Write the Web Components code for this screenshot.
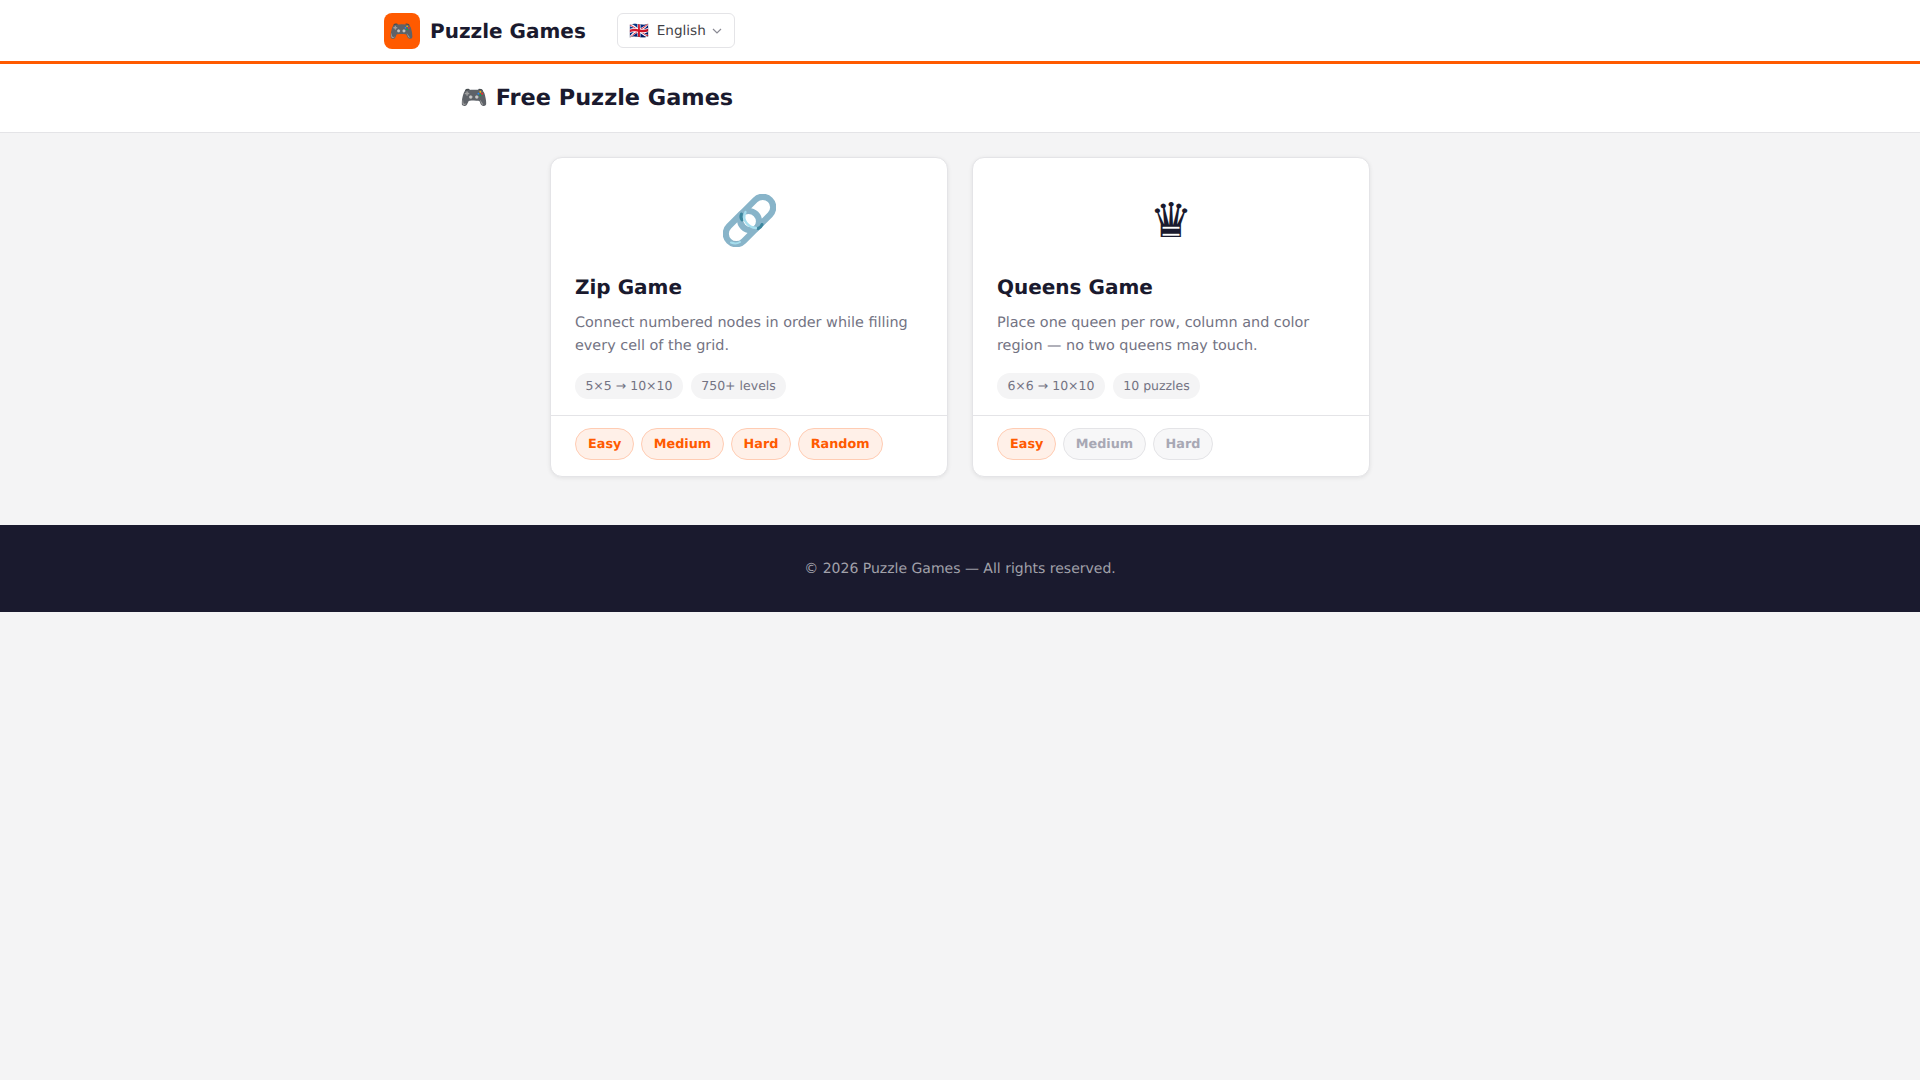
<!DOCTYPE html>
<html lang="en">
<head>
<meta charset="utf-8">
<title>Puzzle Games</title>
<style>
    html, body {
        margin: 0;
        min-height: 100%;
        background: #f4f4f5;
        color: #1a1a2e;
        font-family: "DejaVu Sans", sans-serif;
        text-rendering: geometricPrecision;
    }
</style>
</head>
<body>
<site-header></site-header>
<page-title>🎮 Free Puzzle Games</page-title>
<game-list>
    <game-card name="Zip Game"
        description="Connect numbered nodes in order while filling every cell of the grid."
        tags="5×5 → 10×10|750+ levels"
        levels="Easy|Medium|Hard|Random">
        <svg slot="icon" width="53" height="53" viewBox="0 0 53 53" fill="none" style="display:block;margin-top:-2px">
            <rect x="-19.15" y="-10.5" width="38.3" height="21" rx="10.5" transform="translate(19.4 33.6) rotate(-45)" stroke="#88b4c9" stroke-width="6.2"/>
            <rect x="-19.15" y="-10.5" width="38.3" height="21" rx="10.5" transform="translate(33.6 19.4) rotate(-45)" stroke="#88b4c9" stroke-width="6.2"/>
            <path d="M18.5 20q-1.500 3 .5 6M35 34.500q3-1 4-4" stroke="#2f7f96" stroke-width="3" stroke-linecap="round" opacity=".85"/>
            <path d="M22.500 18q-3 6 1 11 3.500 4.500 9.500 5" stroke="#a6deee" stroke-width="2.400" stroke-linecap="round"/>
            <path d="M8 48.500q5 2 9-.5" stroke="#a6deee" stroke-width="2" stroke-linecap="round"/>
        </svg>
    </game-card>
    <game-card name="Queens Game"
        description="Place one queen per row, column and color region — no two queens may touch."
        tags="6×6 → 10×10|10 puzzles"
        levels="Easy|Medium:off|Hard:off">
        <span slot="icon">♛</span>
    </game-card>
</game-list>
<site-footer>© 2026 Puzzle Games — All rights reserved.</site-footer>

<script>
class SiteHeader extends HTMLElement {
    constructor() {
        super();
        this.attachShadow({ mode: 'open' });
        this.shadowRoot.innerHTML = `
            <style>
                :host {
                    display: block;
                    background: #fff;
                    border-bottom: 3px solid #ff5a00;
                }
                .inner {
                    box-sizing: border-box;
                    max-width: 1200px;
                    height: 61px;
                    margin: 0 auto;
                    padding: 0 24px;
                    display: flex;
                    align-items: center;
                    gap: 31px;
                }
                .brand {
                    display: flex;
                    align-items: center;
                    gap: 10px;
                    font-size: 20px;
                    font-weight: 700;
                    color: #1a1a2e;
                }
                .logo {
                    width: 36px;
                    height: 36px;
                    border-radius: 8px;
                    background: #ff5a00;
                    display: flex;
                    align-items: center;
                    justify-content: center;
                    font-size: 20px;
                    font-weight: 400;
                }
                .lang {
                    display: flex;
                    align-items: center;
                    gap: 6px;
                    height: 35px;
                    box-sizing: border-box;
                    padding: 0 11px 0 12px;
                    background: #fff;
                    border: 1px solid #e4e4e7;
                    border-radius: 6px;
                    font-size: 13.6px;
                    color: #3f3f46;
                }
                .flag { font-size: 16px; line-height: 1; margin-right: 1px; }
                svg { display: block; margin-left: -1px; }
            </style>
            <div class="inner">
                <div class="brand"><span class="logo">🎮</span><span>Puzzle Games</span></div>
                <div class="lang">
                    <span class="flag">🇬🇧</span>
                    <span>English</span>
                    <svg width="12" height="12" viewBox="0 0 12 12" fill="none" stroke="#8a8a94" stroke-width="1.2"><path d="M2 4l4 4 4-4"/></svg>
                </div>
            </div>
        `;
    }
}

class PageTitle extends HTMLElement {
    constructor() {
        super();
        this.attachShadow({ mode: 'open' });
        this.shadowRoot.innerHTML = `
            <style>
                :host {
                    display: block;
                    background: #fff;
                    border-bottom: 1px solid #e4e4e7;
                }
                h1 {
                    box-sizing: border-box;
                    max-width: 1000px;
                    height: 68px;
                    margin: 0 auto;
                    display: flex;
                    align-items: center;
                    font-size: 22.4px;
                    font-weight: 700;
                    color: #1a1a2e;
                }
            </style>
            <h1><span><slot></slot></span></h1>
        `;
    }
}

class GameList extends HTMLElement {
    constructor() {
        super();
        this.attachShadow({ mode: 'open' });
        this.shadowRoot.innerHTML = `
            <style>
                :host {
                    display: grid;
                    grid-template-columns: 398px 398px;
                    gap: 24px;
                    justify-content: center;
                    padding: 24px 0 48px;
                }
            </style>
            <slot></slot>
        `;
    }
}

class GameCard extends HTMLElement {
    constructor() {
        super();
        this.attachShadow({ mode: 'open' });
    }

    connectedCallback() {
        const tags = this.getAttribute('tags').split('|');
        const levels = this.getAttribute('levels').split('|');

        this.shadowRoot.innerHTML = `
            <style>
                :host {
                    display: block;
                    background: #fff;
                    border: 1px solid #e4e4e7;
                    border-radius: 12px;
                    box-shadow: 0 1px 4px rgba(0, 0, 0, .08);
                    overflow: hidden;
                }
                .body { padding: 33px 24px 16px; }
                .icon {
                    height: 60px;
                    line-height: 60px;
                    margin-bottom: 23px;
                    display: flex;
                    align-items: center;
                    justify-content: center;
                    font-size: 48px;
                    color: #1a1a2e;
                }
                h2 {
                    margin: 0 0 12px;
                    font-size: 20px;
                    line-height: 26px;
                    font-weight: 700;
                    color: #1a1a2e;
                }
                p {
                    margin: 0 0 15px;
                    font-size: 14.4px;
                    line-height: 23px;
                    color: #737383;
                }
                .tags { display: flex; gap: 8px; }
                .tag {
                    padding: 0 10.4px;
                    height: 26px;
                    line-height: 26px;
                    border-radius: 13px;
                    background: #f4f4f5;
                    font-size: 12.5px;
                    color: #737383;
                }
                .levels {
                    display: flex;
                    gap: 6.4px;
                    padding: 12px 24px 16px;
                    border-top: 1px solid #e4e4e7;
                }
                .level {
                    box-sizing: border-box;
                    height: 32px;
                    line-height: 31px;
                    padding: 0 12px;
                    border: 1px solid #ffccb3;
                    border-radius: 16px;
                    background: #fff0e8;
                    font-size: 12.8px;
                    font-weight: 700;
                    color: #ff5a00;
                }
                .level.off {
                    border-color: #e4e4e7;
                    background: #f7f7f8;
                    color: #a8a8b4;
                }
            </style>
            <div class="body">
                <div class="icon"><slot name="icon"></slot></div>
                <h2>${this.getAttribute('name')}</h2>
                <p>${this.getAttribute('description')}</p>
                <div class="tags">${tags.map((t) => `<span class="tag">${t}</span>`).join('')}</div>
            </div>
            <div class="levels">
                ${levels.map((l) => {
                    const [label, state] = l.split(':');
                    return `<span class="level ${state || ''}">${label}</span>`;
                }).join('')}
            </div>
        `;
    }
}

class SiteFooter extends HTMLElement {
    constructor() {
        super();
        this.attachShadow({ mode: 'open' });
        this.shadowRoot.innerHTML = `
            <style>
                :host {
                    display: block;
                    padding: 33px 0 31px;
                    background: #1a1a2e;
                    color: #a1a1aa;
                    font-size: 14px;
                    line-height: 23px;
                    text-align: center;
                }
            </style>
            <slot></slot>
        `;
    }
}

customElements.define('site-header', SiteHeader);
customElements.define('page-title', PageTitle);
customElements.define('game-list', GameList);
customElements.define('game-card', GameCard);
customElements.define('site-footer', SiteFooter);
</script>
</body>
</html>
